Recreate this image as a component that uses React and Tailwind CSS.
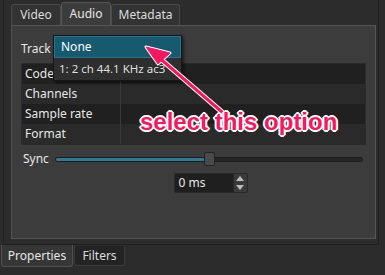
export default function App() {
  const rows = ['Codec', 'Channels', 'Sample rate', 'Format']

  return (
    <div
      className="relative w-[385px] h-[275px] overflow-hidden bg-[#2c2c2c] text-[12px] text-[#e6e6e6]"
      style={{ fontFamily: '"Noto Sans", "DejaVu Sans", sans-serif' }}
    >
      {/* upper dock */}
      <div className="h-[245px] border-l border-r border-b border-[#1f1f1f] ml-[3px] mr-[6px] pl-[7px] pr-[2px] pt-[2px]">
        {/* tabs */}
        <div className="flex items-end h-[23px]">
          <div className="w-[50px] h-[21px] flex items-center justify-center rounded-t-[3px] border border-b-0 border-[#4a4a4a] bg-[#333333] text-[#dcdcdc]">
            Video
          </div>
          <div className="w-[50px] h-[23px] flex items-center justify-center rounded-t-[3px] border border-b-0 border-[#555] bg-[#3c3c3c]">
            Audio
          </div>
          <div className="w-[69px] h-[21px] flex items-center justify-center rounded-t-[3px] border border-b-0 border-[#4a4a4a] bg-[#333333] text-[#dcdcdc]">
            Metadata
          </div>
        </div>

        {/* panel */}
        <div className="h-[214px] border border-[#555] bg-[#3c3c3c] px-[9px] pt-[13px]">
          <div className="flex items-center h-[20px]">
            <span className="w-[33px]">Track</span>
          </div>

          <div className="mt-[4px] w-[345px] border border-[#2a2a2a]">
            {rows.map((r, i) => (
              <div
                key={r}
                className={`flex h-[20px] ${i % 2 === 0 ? 'bg-[#202020]' : 'bg-[#2a2a2a]'}`}
              >
                <div className="w-[99px] pl-[3px] flex items-center border-r border-[#3a3a3a]">{r}</div>
                <div className="flex-1" />
              </div>
            ))}
          </div>

          {/* sync */}
          <div className="flex items-center mt-[7px] h-[14px]">
            <span className="w-[34px] pl-[2px]">Sync</span>
            <div className="relative flex-1 mr-[3px] h-[5px] rounded-full bg-[#282828] border border-[#1c1c1c]">
              <div className="absolute left-0 top-0 h-full w-[150px] rounded-full bg-[#2d7a94]" />
              <div className="absolute left-[148px] top-[-6px] w-[11px] h-[14px] rounded-[2px] bg-[#4a4a4a] border border-[#222]" />
            </div>
          </div>

          <div className="flex justify-center mt-[7px]">
            <div className="ml-[34px] flex w-[74px] h-[20px] rounded-[2px] border border-[#2a2a2a] bg-[#1f1f1f]">
              <div className="flex-1 pl-[4px] flex items-center">0 ms</div>
              <div className="w-[14px] flex flex-col border-l border-[#2a2a2a] bg-[#3a3a3a]">
                <div className="flex-1 flex items-center justify-center">
                  <svg width="8" height="5" viewBox="0 0 8 5"><path d="M0 5 L4 0 L8 5Z" fill="#bdbdbd" /></svg>
                </div>
                <div className="flex-1 flex items-center justify-center">
                  <svg width="8" height="5" viewBox="0 0 8 5"><path d="M0 0 L8 0 L4 5Z" fill="#bdbdbd" /></svg>
                </div>
              </div>
            </div>
          </div>
        </div>
      </div>

      {/* bottom tabs */}
      <div className="flex items-start pl-[1px]">
        <div className="w-[72px] h-[22px] flex items-center justify-center rounded-b-[3px] border border-t-0 border-[#505050] bg-[#363636] text-[#e6e6e6]">
          Properties
        </div>
        <div className="ml-[1px] mt-[1px] w-[51px] h-[20px] flex items-center justify-center rounded-b-[3px] border border-t-0 border-[#3c3c3c] bg-[#232323] text-[#dcdcdc]">
          Filters
        </div>
      </div>

      {/* dropdown popup */}
      <div className="absolute left-[53px] top-[35px] w-[129px] border border-[#161616] bg-[#2e2e2e] shadow-[2px_2px_3px_rgba(0,0,0,0.5)]">
        <div className="h-[22px] flex items-center pl-[6px] bg-[#17596f] border border-[#2a7390] text-white">None</div>
        <div className="h-[22px] flex items-center pl-[5px] text-[#dedede] text-[11.5px]">1: 2 ch 44.1 KHz ac3</div>
      </div>

      {/* annotation arrow */}
      <svg className="absolute left-0 top-0" width="385" height="275" viewBox="0 0 385 275">
        <line x1="222" y1="112" x2="156" y2="55" stroke="#fff" strokeWidth="5" strokeLinecap="round" />
        <path d="M146 47 L170 53 L158 64 Z" fill="#fff" stroke="#fff" strokeWidth="3" strokeLinejoin="round" />
        <line x1="222" y1="112" x2="156" y2="55" stroke="#f5175f" strokeWidth="3" strokeLinecap="round" />
        <path d="M146 47 L170 53 L158 64 Z" fill="#f5175f" stroke="#f5175f" strokeWidth="1" strokeLinejoin="round" />
      </svg>

      <div
        className="absolute left-[140px] top-[110px] text-[24px] font-bold text-[#f5175f] leading-none"
        style={{
          fontFamily: '"Liberation Sans", Arial, sans-serif',
          textShadow:
            '1px 0 #fff, -1px 0 #fff, 0 1px #fff, 0 -1px #fff, 1px 1px #fff, -1px -1px #fff, 1px -1px #fff, -1px 1px #fff, 2px 0 #fff, -2px 0 #fff, 0 2px #fff, 0 -2px #fff',
        }}
      >
        select this option
      </div>
    </div>
  )
}
